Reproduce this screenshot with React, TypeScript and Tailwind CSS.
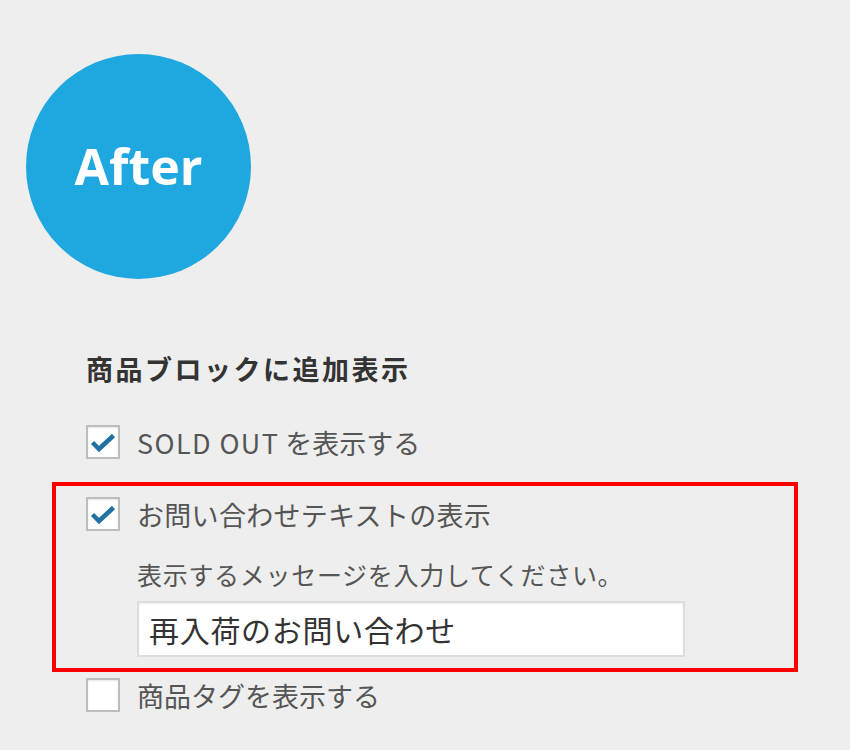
import React from "react";

const jp = { fontFamily: '"Noto Sans CJK JP", "Noto Sans", sans-serif' };

function Check({ checked }: { checked: boolean }) {
  return (
    <div className="relative h-[34px] w-[34px] shrink-0 border-2 border-[#bdbdbd] bg-white shadow-[inset_0_1px_2px_rgba(0,0,0,0.1)]">
      {checked && (
        <svg className="absolute left-0 top-0" width="30" height="30" viewBox="0 0 30 30">
          <path d="M4.5 15.5 L11 22 L25.5 8.5" fill="none" stroke="#1f72a4" strokeWidth="4.5" strokeLinejoin="miter" />
        </svg>
      )}
    </div>
  );
}

function Row({ checked, children }: { checked: boolean; children: React.ReactNode }) {
  return (
    <div className="flex h-[36px] items-center gap-[17px]">
      <Check checked={checked} />
      <span className="text-[27px] leading-none text-[#555]">{children}</span>
    </div>
  );
}

export default function App() {
  return (
    <div className="h-[750px] w-[850px] overflow-hidden bg-[#eeeeee] pt-[54px]" style={jp}>
      {/* バッジ */}
      <div className="ml-[26px] flex h-[225px] w-[225px] items-center justify-center rounded-full bg-[#1fa7e0]">
        <span
          className="pb-[2px] text-[50px] font-bold leading-none text-white"
          style={{ fontFamily: '"Open Sans", sans-serif' }}
        >
          After
        </span>
      </div>

      <div className="mt-[76px]">
        <h2 className="ml-[86px] text-[27px] font-bold leading-none tracking-[2.5px] text-[#333]">商品ブロックに追加表示</h2>

        <div className="ml-[86px] mt-[42px]">
          <Row checked>
            <span className="tracking-[1.4px]">SOLD OUT</span> を表示する
          </Row>
        </div>

        {/* 追加した項目 */}
        <div className="ml-[52px] mt-[22px] h-[190px] w-[746px] border-4 border-[#ff0000] pl-[30px] pt-[10px]">
          <Row checked>
            <span className="tracking-[0.3px]">お問い合わせテキストの表示</span>
          </Row>
          <div className="ml-[51px] mt-[30px] text-[25px] leading-none tracking-[0.7px] text-[#555]">表示するメッセージを入力してください。</div>
          <div className="ml-[51px] mt-[14px] flex h-[56px] w-[548px] items-center border-2 border-[#dddddd] bg-white pl-[10px] shadow-[inset_0_1px_2px_rgba(0,0,0,0.07)]">
            <span className="text-[30px] leading-none tracking-[0.7px] text-[#333]">再入荷のお問い合わせ</span>
          </div>
        </div>

        <div className="ml-[86px] mt-[5px]">
          <Row checked={false}>商品タグを表示する</Row>
        </div>
      </div>
    </div>
  );
}
